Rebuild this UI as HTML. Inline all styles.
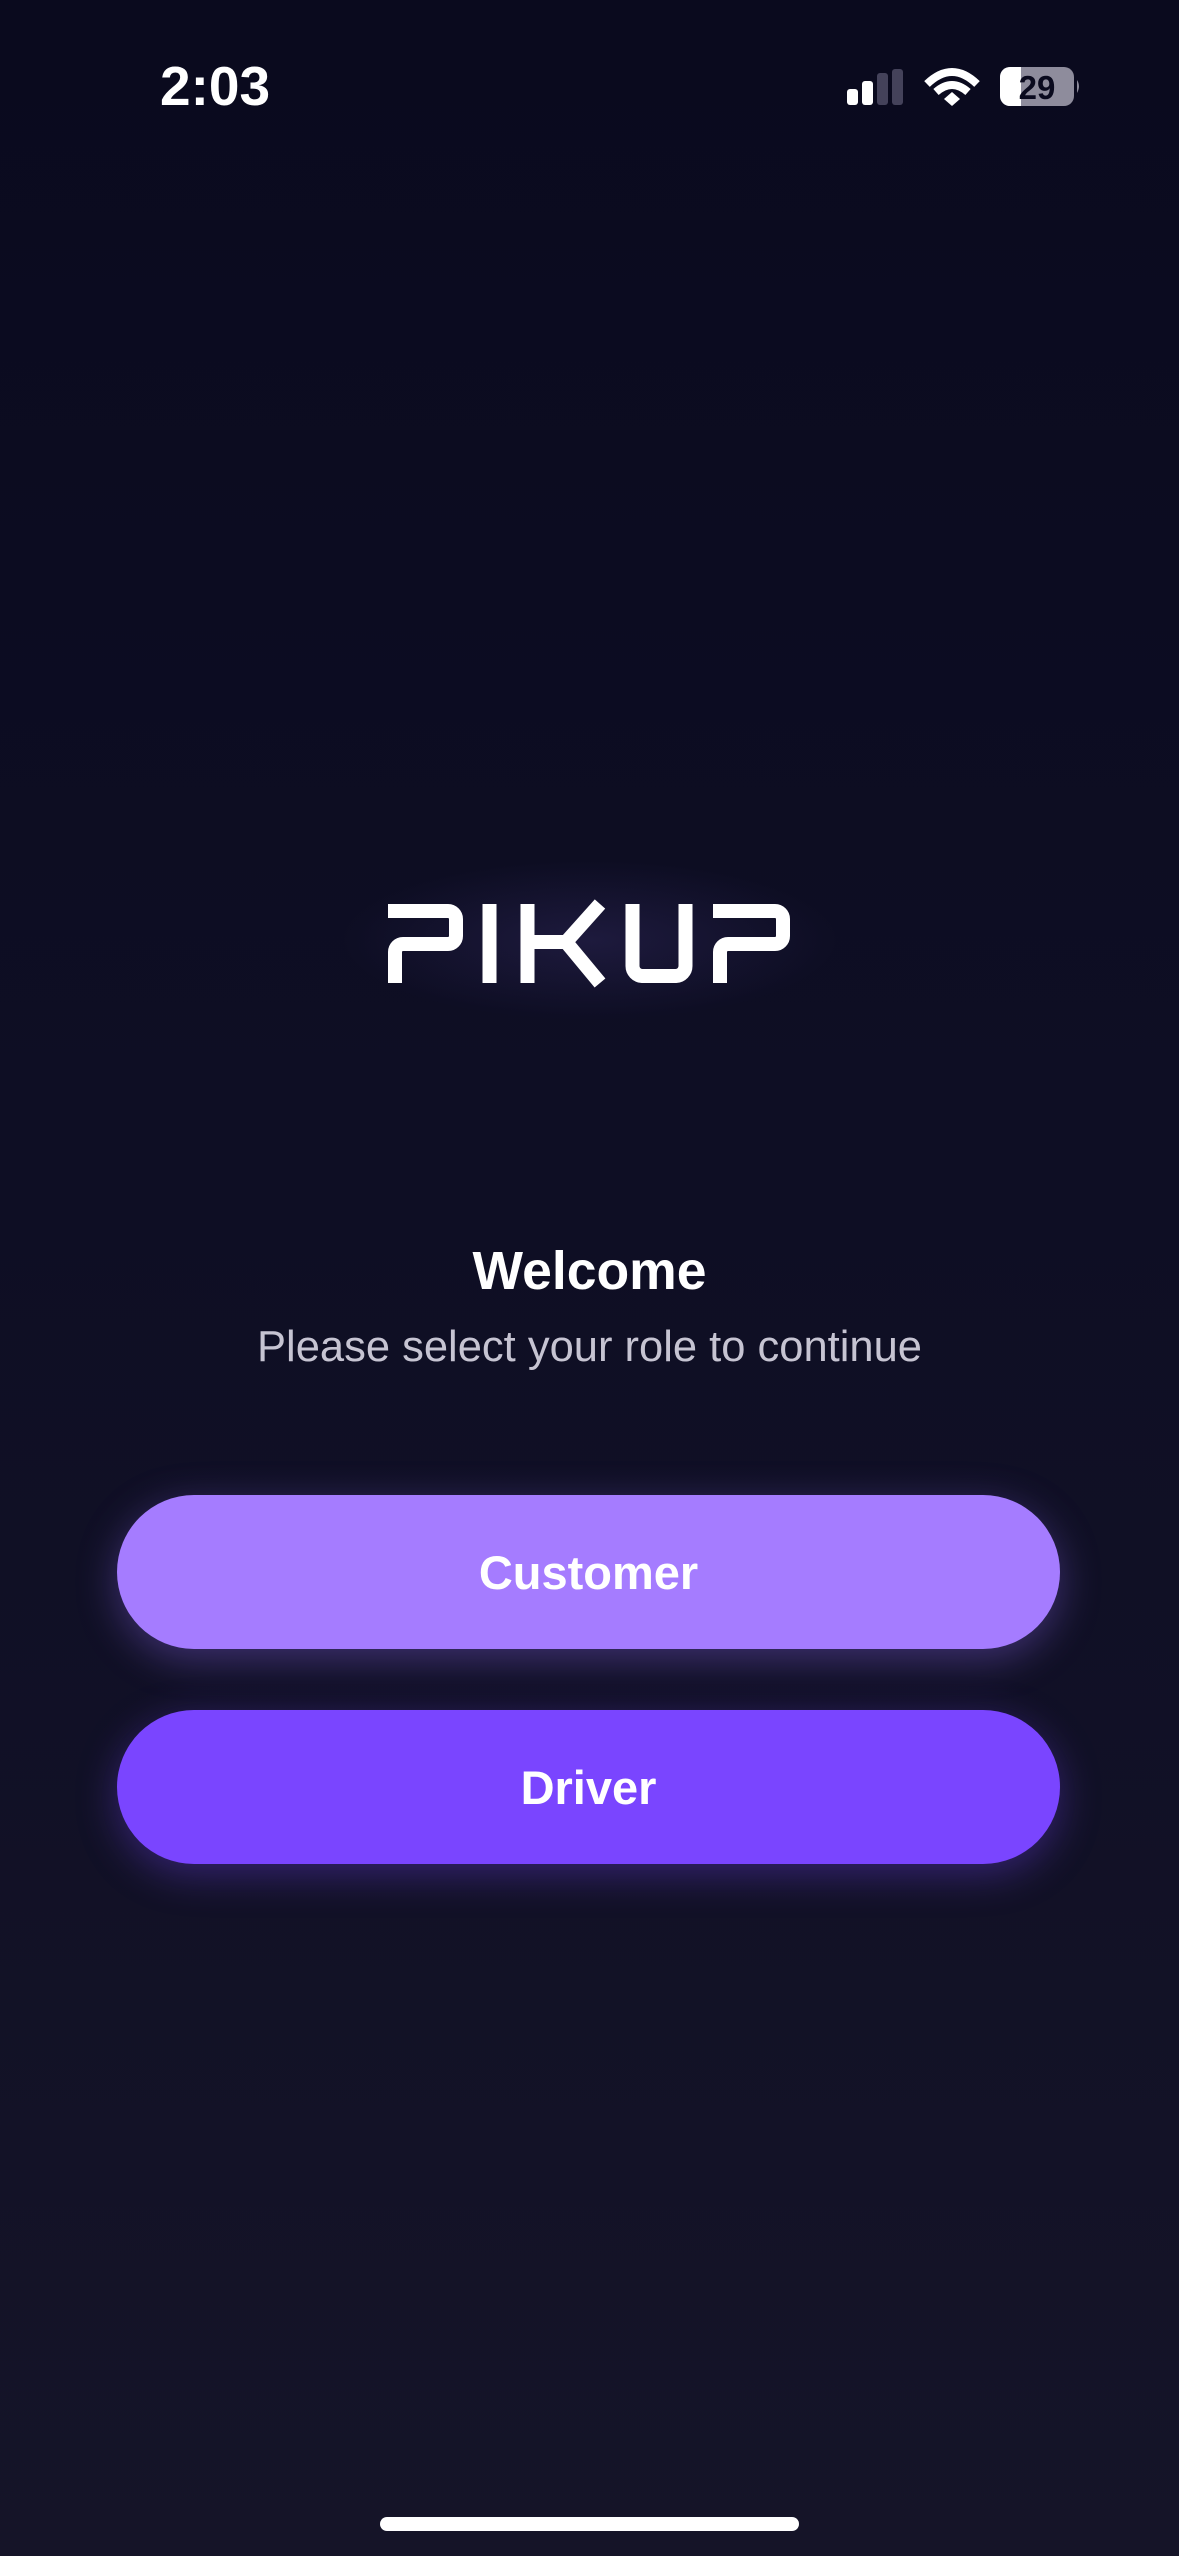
<!DOCTYPE html>
<html><head><style>
html,body{margin:0;padding:0}
body{width:1179px;height:2556px;position:relative;overflow:hidden;background:linear-gradient(#0a0a1e 0%,#0e0e24 45%,#151428 100%);font-family:"Liberation Sans",sans-serif}
.t{position:absolute;left:0;width:1179px;text-align:center}
.btn{position:absolute;left:117px;width:943px;height:154px;border-radius:77px;color:#fff;font-weight:bold;font-size:47px;display:flex;align-items:center;justify-content:center}
</style></head><body>
<div style="position:absolute;left:160px;top:54px;color:#fff;font-size:55px;font-weight:bold">2:03</div>
<svg style="position:absolute;left:0;top:0" width="1179" height="140">
<rect x="847" y="89" width="11" height="16" rx="3" fill="#fff"/>
<rect x="862" y="81" width="11" height="24" rx="3" fill="#fff"/>
<rect x="877" y="73" width="11" height="32" rx="3" fill="#44425a"/>
<rect x="892" y="69" width="11" height="36" rx="3" fill="#44425a"/>
<path d="M927 84 Q952 60 977 84" stroke="#fff" stroke-width="8" fill="none"/>
<path d="M936 92 Q952 78 968 92" stroke="#fff" stroke-width="8" fill="none"/>
<path d="M944 99 L952 92 L960 99 L952 106Z" fill="#fff"/>
<rect x="1000" y="67" width="74" height="39" rx="10" fill="#8e8c9c"/>
<path d="M1010 67 H1021 V106 H1010 A10 10 0 0 1 1000 96 V77 A10 10 0 0 1 1010 67Z" fill="#fff"/>
<path d="M1077 80 Q1081 86 1077 93Z" fill="#8e8c9c"/>
<text x="1037" y="99" text-anchor="middle" font-size="33" font-weight="bold" fill="#0a0a1e" font-family="Liberation Sans">29</text>
</svg>
<div style="position:absolute;left:340px;top:860px;width:500px;height:160px;background:radial-gradient(ellipse at center,rgba(60,50,110,0.35),rgba(0,0,0,0) 70%)"></div>
<svg style="position:absolute;left:0;top:0" width="1179" height="1100" fill="none" stroke="#fff" stroke-width="14">
<path d="M388 911 H448 A8 8 0 0 1 456 919 V936 A8 8 0 0 1 448 944 H403 A8 8 0 0 0 395 952 V983"/>
<path d="M489.5 904 V983"/>
<path d="M527.5 904 V983 M534 942 H566 L600 904 M566 942 L600 983"/>
<path d="M632.5 904 V966 A10 10 0 0 0 642 976 H676 A10 10 0 0 0 685.5 966 V904"/>
<path d="M713 911 H775 A8 8 0 0 1 783 919 V936 A8 8 0 0 1 775 944 H728 A8 8 0 0 0 720 952 V983"/>
</svg>
<div class="t" style="top:1241px;color:#fff;font-size:53.5px;font-weight:bold">Welcome</div>
<div class="t" style="top:1323px;color:#c6c4d2;font-size:43.5px">Please select your role to continue</div>
<div class="btn" style="top:1495px;background:#a57cff;box-shadow:0 10px 40px rgba(150,110,255,0.35)">Customer</div>
<div class="btn" style="top:1710px;background:#7a45ff;box-shadow:0 10px 40px rgba(120,70,255,0.35)">Driver</div>
<div style="position:absolute;left:380px;top:2517px;width:419px;height:14px;border-radius:7px;background:#fff"></div>
</body></html>
